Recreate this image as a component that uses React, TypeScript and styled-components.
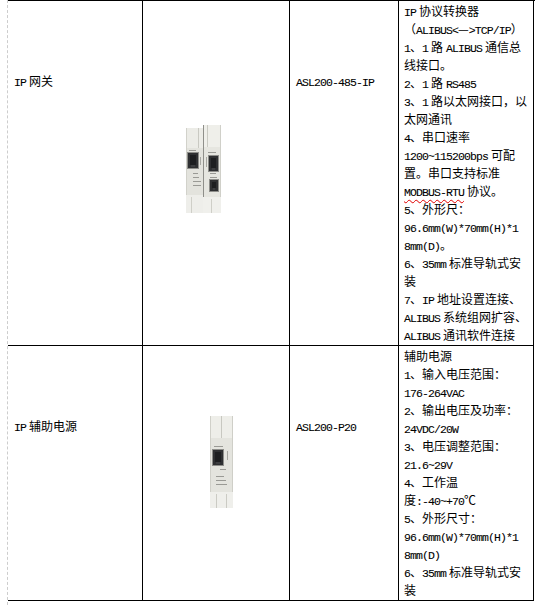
import React from "react";
import styled, { createGlobalStyle } from "styled-components";

const GlobalStyle = createGlobalStyle`
  html, body {
    margin: 0;
    padding: 0;
    background: #fff;
  }
  body {
    font-family: "Noto Sans CJK SC", "Noto Sans", sans-serif;
    font-size: 12px;
    line-height: 18px;
    color: #000;
  }
`;

const Page = styled.div`
  margin-left: 7px;
  min-height: 605px;
  border-left: 1px dashed #cdcdcd;
`;

const Table = styled.div`
  display: grid;
  grid-template-columns: 135px 147px 109px 135px;
  border-top: 1px solid #000;
`;

const Cell = styled.div`
  min-width: 0;
  border-right: 1px solid #000;
  border-bottom: 1px solid #000;
`;

const LabelCell = styled(Cell)`
  padding: 71px 4px 0 6px;
  white-space: nowrap;
`;

const PhotoCell = styled(Cell)<{ $top: number; $left: number }>`
  padding: ${(p) => p.$top}px 0 0 ${(p) => p.$left}px;

  svg {
    display: block;
  }
`;

const SpecCell = styled(Cell)`
  padding: 1px 2px 1px 5px;
`;

const SpecLine = styled.div`
  height: 18px;
  white-space: nowrap;
`;

const Latin = styled.span<{ $lead?: boolean; $trail?: boolean }>`
  font-family: "Liberation Mono", monospace;
  font-size: 11.5px;
  letter-spacing: -0.9px;
  -webkit-text-stroke: 0.08px #000;
  margin-left: ${(p) => (p.$lead ? "3px" : "0")};
  margin-right: ${(p) => (p.$trail ? "3px" : "0")};
`;

const Misspelled = styled.span`
  text-decoration: underline wavy #e00000;
  text-decoration-thickness: 1px;
  text-underline-offset: 3px;
`;

// words that Word flags with a red squiggle
const FLAGGED = ["MODBUS-RTU"];

const isHan = (c?: string) => !!c && /[\u4e00-\u9fff]/.test(c);
const isWordChar = (c?: string) => !!c && /[A-Za-z0-9]/.test(c);
const isAscii = (s: string) => /^[\x20-\x7E]+$/.test(s);

// half-width runs get a monospace face, like SimSun's latin glyphs;
// letters next to ideographs get Word's small east-asian spacing
const Mixed = ({ text }: { text: string }) => {
  const runs = text.split(/([\x20-\x7E]+)/).filter(Boolean);
  return (
    <>
      {runs.map((run, i) => {
        if (!isAscii(run)) return <React.Fragment key={i}>{run}</React.Fragment>;
        const lead = isWordChar(run[0]) && isHan(runs[i - 1]?.slice(-1));
        const trail = isWordChar(run.slice(-1)) && isHan(runs[i + 1]?.[0]);
        const latin = (
          <Latin key={i} $lead={lead} $trail={trail}>
            {run}
          </Latin>
        );
        return FLAGGED.includes(run) ? <Misspelled key={i}>{latin}</Misspelled> : latin;
      })}
    </>
  );
};

const Port = ({ x, y, w = 10, h = 15 }: { x: number; y: number; w?: number; h?: number }) => (
  <g>
    <rect x={x - 1} y={y - 1} width={w + 2} height={h + 2} fill="#8e8e8a" />
    <rect x={x} y={y} width={w} height={h} fill="#2f3032" />
    <rect x={x + 2} y={y + 2} width={w - 4} height={h - 5} fill="#1d1e20" />
    <rect x={x + 3} y={y + h - 3} width={w - 6} height={2} fill="#3d3e40" />
  </g>
);

const Marks = ({ x, y, widths }: { x: number; y: number; widths: number[] }) => (
  <g fill="#9a9a95">
    {widths.map((w, i) => (
      <rect key={i} x={x} y={y + i * 4} width={w} height={1} />
    ))}
  </g>
);

const GatewayPhoto = () => (
  <svg width="35" height="88" viewBox="0 0 35 88">
    {/* left module */}
    <rect x="0" y="3" width="17" height="85" fill="#e3e3dd" />
    <rect x="0" y="3" width="17" height="20" fill="#ecece7" />
    <rect x="12" y="3" width="1" height="20" fill="#c9c9c2" />
    <rect x="0" y="3" width="1" height="85" fill="#d2d2cb" />
    <Port x={2} y={28} />
    <Marks x={3} y={25} widths={[7]} />
    <rect x="14" y="32" width="1" height="8" fill="#a8a8a2" />
    <Marks x={7} y={48} widths={[5, 6, 8, 8]} />
    <rect x="0" y="70" width="17" height="18" fill="#eeeeea" />
    <rect x="5" y="72" width="1" height="16" fill="#cfcfc8" />
    {/* right module */}
    <rect x="17" y="0" width="18" height="88" fill="#e6e6e0" />
    <rect x="17" y="0" width="18" height="22" fill="#efefea" />
    <rect x="21" y="0" width="1" height="22" fill="#cacac3" />
    <rect x="17" y="0" width="1" height="88" fill="#8f8f8a" />
    <rect x="34" y="0" width="1" height="88" fill="#d0d0c9" />
    <Marks x={22} y={27} widths={[8]} />
    <Port x={23} y={31} w={9} h={15} />
    <rect x="20" y="32" width="1" height="10" fill="#a8a8a2" />
    <Marks x={24} y={48} widths={[6, 7]} />
    <Port x={24} y={55} w={8} h={11} />
    <rect x="17" y="72" width="18" height="16" fill="#f0f0ec" />
    <rect x="25" y="74" width="1" height="14" fill="#cfcfc8" />
  </svg>
);

const PowerPhoto = () => (
  <svg width="23" height="92" viewBox="0 0 23 92">
    <rect x="0" y="0" width="23" height="92" fill="#e4e4de" />
    <rect x="0" y="0" width="23" height="22" fill="#eeeee9" />
    <rect x="11" y="0" width="1" height="22" fill="#c8c8c1" />
    <rect x="0" y="0" width="1" height="92" fill="#d0d0c9" />
    <rect x="22" y="0" width="1" height="92" fill="#cfcfc8" />
    <Marks x={4} y={30} widths={[9]} />
    <Port x={3} y={34} />
    <rect x="17" y="35" width="1" height="9" fill="#a5a59f" />
    <Marks x={10} y={53} widths={[6]} />
    <Marks x={6} y={60} widths={[8, 10, 11]} />
    <rect x="0" y="76" width="23" height="16" fill="#efefeb" />
    <rect x="6" y="78" width="1" height="14" fill="#cbcbc4" />
    <rect x="16" y="78" width="1" height="14" fill="#cbcbc4" />
  </svg>
);

type Product = {
  name: string;
  model: string;
  photo: React.ReactNode;
  photoTop: number;
  photoLeft: number;
  specs: string[];
};

const products: Product[] = [
  {
    name: "IP网关",
    model: "ASL200-485-IP",
    photo: <GatewayPhoto />,
    photoTop: 124,
    photoLeft: 43,
    specs: [
      "IP协议转换器",
      "（ALIBUS<—>TCP/IP）",
      "1、1路ALIBUS通信总",
      "线接口。",
      "2、1路RS485",
      "3、1路以太网接口，以",
      "太网通讯",
      "4、串口速率",
      "1200~115200bps可配",
      "置。串口支持标准",
      "MODBUS-RTU协议。",
      "5、外形尺：",
      "96.6mm(W)*70mm(H)*1",
      "8mm(D)。",
      "6、35mm标准导轨式安",
      "装",
      "7、IP地址设置连接、",
      "ALIBUS系统组网扩容、",
      "ALIBUS通讯软件连接",
    ],
  },
  {
    name: "IP辅助电源",
    model: "ASL200-P20",
    photo: <PowerPhoto />,
    photoTop: 70,
    photoLeft: 67,
    specs: [
      "辅助电源",
      "1、输入电压范围：",
      "176-264VAC",
      "2、输出电压及功率：",
      "24VDC/20W",
      "3、电压调整范围：",
      "21.6~29V",
      "4、工作温",
      "度:-40~+70℃",
      "5、外形尺寸：",
      "96.6mm(W)*70mm(H)*1",
      "8mm(D)",
      "6、35mm标准导轨式安",
      "装",
    ],
  },
];

const App = () => (
  <>
    <GlobalStyle />
    <Page>
      <Table>
        {products.map((p) => (
          <React.Fragment key={p.model}>
            <LabelCell>
              <Mixed text={p.name} />
            </LabelCell>
            <PhotoCell $top={p.photoTop} $left={p.photoLeft}>
              {p.photo}
            </PhotoCell>
            <LabelCell>
              <Mixed text={p.model} />
            </LabelCell>
            <SpecCell>
              {p.specs.map((line, i) => (
                <SpecLine key={i}>
                  <Mixed text={line} />
                </SpecLine>
              ))}
            </SpecCell>
          </React.Fragment>
        ))}
      </Table>
    </Page>
  </>
);

export default App;
